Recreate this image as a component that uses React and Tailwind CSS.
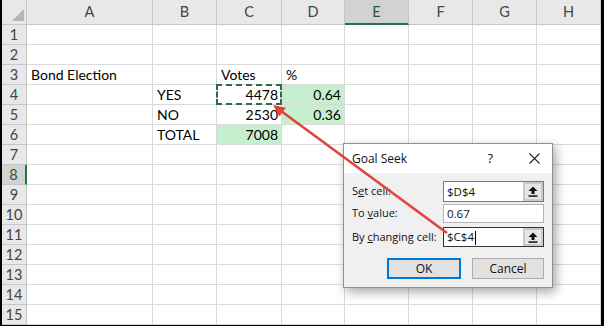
import React from "react";

const COLS = ["A", "B", "C", "D", "E", "F", "G", "H"];

function Cell({ children, className = "" }) {
  return (
    <div
      className={`relative border-r border-b border-[#dadada] flex items-end pb-[1px] leading-[16px] text-[14px] text-black whitespace-nowrap ${className}`}
    >
      {children}
    </div>
  );
}

function UpButton() {
  return (
    <div className="w-[20px] h-full border-2 border-[#c9c9c9] bg-[#e6e6e6] flex items-center justify-center">
      <svg width="10" height="11" viewBox="0 0 10 11">
        <path d="M5 0.5 L9.5 5 H6.5 V8 H3.5 V5 H0.5 Z" fill="#111" />
        <rect x="0.5" y="9.3" width="9" height="1.5" fill="#111" />
      </svg>
    </div>
  );
}

function Dialog() {
  return (
    <div className="absolute left-[343px] top-[143px] w-[210px] h-[145px] bg-[#f0f0f0] border border-[#8f8f8f] shadow-[3px_4px_10px_rgba(0,0,0,0.35)] font-['Open_Sans',sans-serif] text-[11px] text-[#111] flex flex-col whitespace-nowrap">
      <div className="h-[29px] bg-white flex items-center pl-[8px] pr-[12px]">
        <span className="text-[12px]">Goal Seek</span>
        <span className="ml-auto mr-[36px] text-[13px]">?</span>
        <svg width="11" height="11" viewBox="0 0 11 11">
          <path d="M0.5 0.5 L10.5 10.5 M10.5 0.5 L0.5 10.5" stroke="#222" strokeWidth="1.1" />
        </svg>
      </div>
      <div className="flex flex-col px-[8px] pt-[8px]">
        <div className="flex items-center h-[21px]">
          <span className="flex-1 min-w-0">
            S<span className="underline">e</span>t cell:
          </span>
          <div className="w-[101px] h-full border border-[#7a7a7a] bg-white flex">
            <span className="flex-1 pl-[3px] leading-[19px] text-[11.5px]">$D$4</span>
            <UpButton />
          </div>
        </div>
        <div className="flex items-center h-[19px] mt-[2px]">
          <span className="flex-1 min-w-0">
            To <span className="underline">v</span>alue:
          </span>
          <div className="w-[101px] h-full border border-[#b4b4b4] bg-white flex">
            <span className="flex-1 pl-[3px] leading-[17px] text-[11.5px]">0.67</span>
          </div>
        </div>
        <div className="flex items-center h-[20px] mt-[4px]">
          <span className="flex-1 min-w-0">
            By <span className="underline">c</span>hanging cell:
          </span>
          <div className="w-[101px] h-full border border-[#333] bg-white flex">
            <span className="flex-1 pl-[3px] leading-[18px] text-[11.5px]">
              $C$4<span className="inline-block w-[1px] h-[14px] bg-black align-middle ml-[1px]" />
            </span>
            <UpButton />
          </div>
        </div>
        <div className="flex justify-end gap-[11px] mt-[11px]">
          <button className="w-[74px] h-[21px] border-2 border-[#0078d7] bg-[#e1e1e1] text-[12px] leading-[17px]">
            OK
          </button>
          <button className="w-[72px] h-[21px] border border-[#adadad] bg-[#e1e1e1] text-[12px] leading-[19px]">
            Cancel
          </button>
        </div>
      </div>
    </div>
  );
}

function Arrow() {
  const x1 = 447, y1 = 233, x2 = 273, y2 = 105;
  const dx = x2 - x1, dy = y2 - y1;
  const len = Math.hypot(dx, dy);
  const ux = dx / len, uy = dy / len;
  const hl = 12, hw = 5.5;
  const bx = x2 - ux * hl, by = y2 - uy * hl;
  const px = -uy, py = ux;
  const pts = `${x2},${y2} ${bx + px * hw},${by + py * hw} ${bx - px * hw},${by - py * hw}`;
  return (
    <svg className="absolute left-0 top-0 pointer-events-none" width="604" height="326">
      <line x1={x1} y1={y1} x2={bx + ux * 2} y2={by + uy * 2} stroke="#e0443c" strokeWidth="2.6" />
      <polygon points={pts} fill="#e0443c" />
    </svg>
  );
}

export default function App() {
  const rows = Array.from({ length: 15 }, (_, i) => i + 1);
  const data = {
    "3A": { t: "Bond Election" },
    "3C": { t: "Votes" },
    "3D": { t: "%" },
    "4B": { t: "YES" },
    "4C": { t: "4478", r: true, dash: true },
    "4D": { t: "0.64", r: true, g: true },
    "5B": { t: "NO" },
    "5C": { t: "2530", r: true },
    "5D": { t: "0.36", r: true, g: true },
    "6B": { t: "TOTAL" },
    "6C": { t: "7008", r: true, g: true },
  };
  return (
    <div className="relative w-[604px] h-[326px] bg-black pl-[2px] pr-[3px] pb-[1px] overflow-hidden font-['Lato',sans-serif]">
      <div className="bg-white h-full grid grid-cols-[25px_126px_64px_65px_63px_64px_64px_64px_64px] grid-rows-[25px_repeat(15,20px)]">
        <div className="bg-[#e8e8e8] border-r border-b border-[#c6c6c6] flex items-end justify-end pr-[2px] pb-[3px]">
          <svg width="12" height="12" viewBox="0 0 12 12">
            <path d="M12 0 L12 12 L0 12 Z" fill="#b5b5b5" />
          </svg>
        </div>
        {COLS.map((c) =>
          c === "E" ? (
            <div
              key={c}
              className="bg-[#d2d2d2] border-r border-[#c6c6c6] border-b-2 border-b-[#217346] flex items-center justify-center text-[14.5px] text-[#1e5b3a]"
            >
              {c}
            </div>
          ) : (
            <div
              key={c}
              className="bg-[#e8e8e8] border-r border-b border-[#c6c6c6] flex items-center justify-center text-[14.5px] text-[#444]"
            >
              {c}
            </div>
          )
        )}
        {rows.map((r) => (
          <React.Fragment key={r}>
            {r === 8 ? (
              <div className="bg-[#d2d2d2] border-b border-[#c6c6c6] border-r-2 border-r-[#217346] flex items-center justify-center text-[14.5px] text-[#1e5b3a]">
                {r}
              </div>
            ) : (
              <div className="bg-[#e8e8e8] border-r border-b border-[#c6c6c6] flex items-center justify-center text-[14.5px] text-[#444]">
                {r}
              </div>
            )}
            {COLS.map((c) => {
              const d = data[`${r}${c}`];
              if (!d) return <Cell key={c} />;
              return (
                <Cell
                  key={c}
                  className={`${d.r ? "justify-end pr-[3px]" : "pl-[4px]"} ${
                    d.g ? "bg-[#c6efce] text-[#1a6b2c] border-[#c6efce]" : ""
                  }`}
                >
                  {d.t}
                  {d.dash && (
                    <span className="absolute left-[-1px] top-[-1px] right-[-1px] bottom-[-1px] border-2 border-dashed border-[#2f6b4a]" />
                  )}
                </Cell>
              );
            })}
          </React.Fragment>
        ))}
      </div>
      <Dialog />
      <Arrow />
    </div>
  );
}
